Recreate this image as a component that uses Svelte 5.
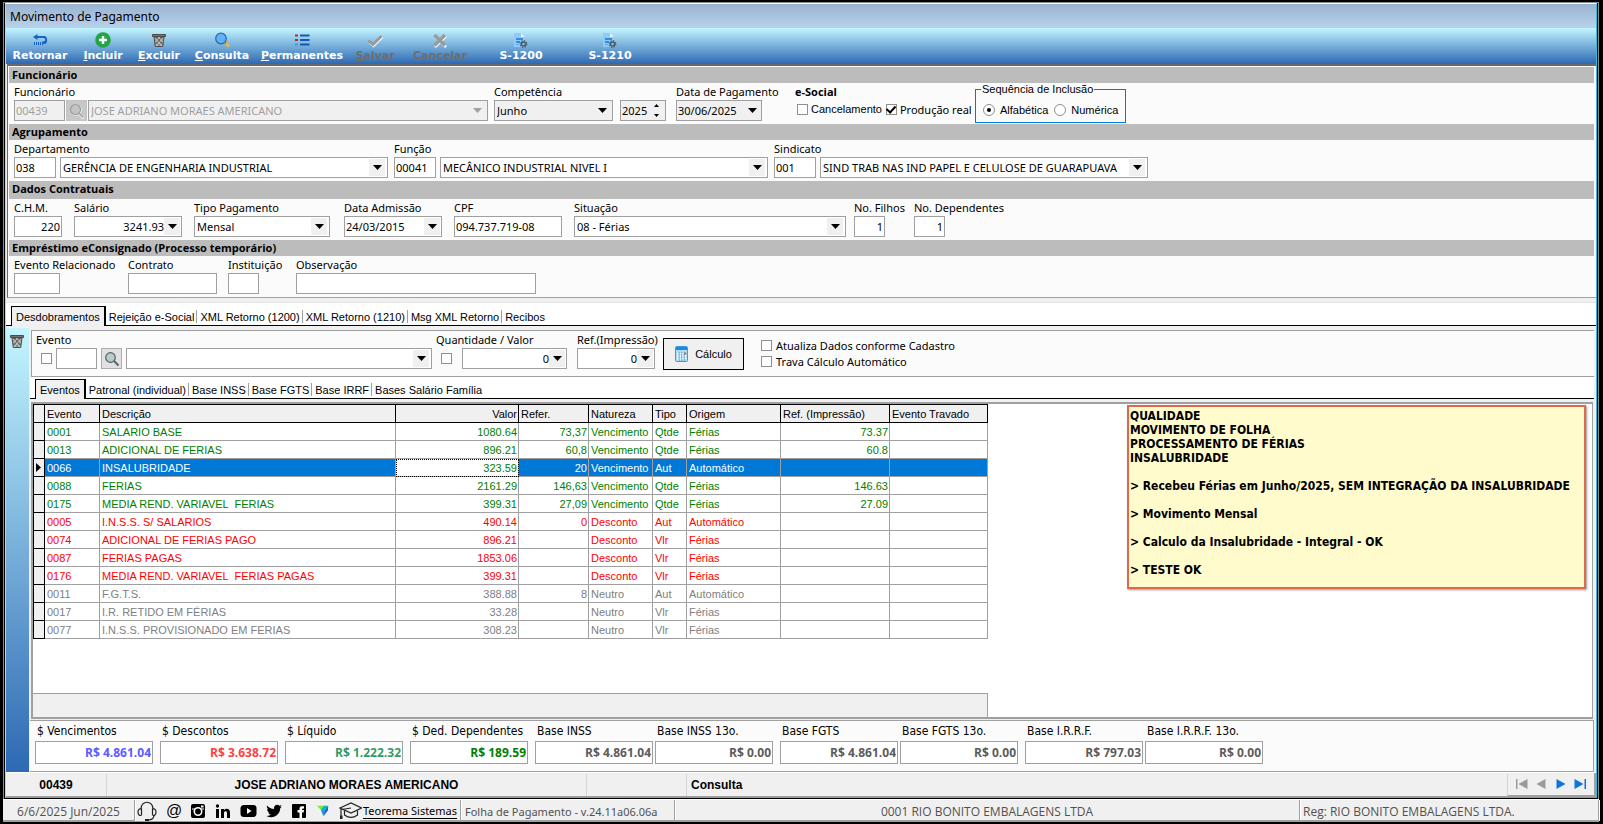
<script lang="ts">
  interface EventRow {
    code: string;
    name: string;
    value: string;
    ref?: string;
    nature: string;
    type: string;
    origin: string;
    printRef?: string;
  }

  const tools = [
    { icon: 'back', label: 'Retornar' },
    { icon: 'plus', label: 'Incluir', key: true },
    { icon: 'trash', label: 'Excluir', key: true },
    { icon: 'lens', label: 'Consulta', key: true },
    { icon: 'list', label: 'Permanentes', key: true },
    { icon: 'check', label: 'Salvar', key: true, disabled: true },
    { icon: 'cross', label: 'Cancelar', disabled: true },
    { icon: 'doc', label: 'S-1200' },
    { icon: 'doc', label: 'S-1210' },
  ];

  const mainTabs = ['Desdobramentos', 'Rejeição e-Social', 'XML Retorno (1200)', 'XML Retorno (1210)', 'Msg XML Retorno', 'Recibos'];
  const eventTabs = ['Eventos', 'Patronal (individual)', 'Base INSS', 'Base FGTS', 'Base IRRF', 'Bases Salário Família'];

  const rows: EventRow[] = [
    { code: '0001', name: 'SALARIO BASE', value: '1080.64', ref: '73,37', nature: 'Vencimento', type: 'Qtde', origin: 'Férias', printRef: '73.37' },
    { code: '0013', name: 'ADICIONAL DE FERIAS', value: '896.21', ref: '60,8', nature: 'Vencimento', type: 'Qtde', origin: 'Férias', printRef: '60.8' },
    { code: '0066', name: 'INSALUBRIDADE', value: '323.59', ref: '20', nature: 'Vencimento', type: 'Aut', origin: 'Automático' },
    { code: '0088', name: 'FERIAS', value: '2161.29', ref: '146,63', nature: 'Vencimento', type: 'Qtde', origin: 'Férias', printRef: '146.63' },
    { code: '0175', name: 'MEDIA REND. VARIAVEL  FERIAS', value: '399.31', ref: '27,09', nature: 'Vencimento', type: 'Qtde', origin: 'Férias', printRef: '27.09' },
    { code: '0005', name: 'I.N.S.S. S/ SALARIOS', value: '490.14', ref: '0', nature: 'Desconto', type: 'Aut', origin: 'Automático' },
    { code: '0074', name: 'ADICIONAL DE FERIAS PAGO', value: '896.21', nature: 'Desconto', type: 'Vlr', origin: 'Férias' },
    { code: '0087', name: 'FERIAS PAGAS', value: '1853.06', nature: 'Desconto', type: 'Vlr', origin: 'Férias' },
    { code: '0176', name: 'MEDIA REND. VARIAVEL  FERIAS PAGAS', value: '399.31', nature: 'Desconto', type: 'Vlr', origin: 'Férias' },
    { code: '0011', name: 'F.G.T.S.', value: '388.88', ref: '8', nature: 'Neutro', type: 'Aut', origin: 'Automático' },
    { code: '0017', name: 'I.R. RETIDO EM FÉRIAS', value: '33.28', nature: 'Neutro', type: 'Vlr', origin: 'Férias' },
    { code: '0077', name: 'I.N.S.S. PROVISIONADO EM FERIAS', value: '308.23', nature: 'Neutro', type: 'Vlr', origin: 'Férias' },
  ];

  const totals = [
    { id: 'venc', label: '$ Vencimentos', value: 'R$ 4.861.04', tone: 'blue' },
    { id: 'desc', label: '$ Descontos', value: 'R$ 3.638.72', tone: 'red' },
    { id: 'liq', label: '$ Líquido', value: 'R$ 1.222.32', tone: 'teal' },
    { id: 'dep', label: '$ Ded. Dependentes', value: 'R$ 189.59', tone: 'green' },
    { id: 'inss', label: 'Base INSS', value: 'R$ 4.861.04', pair: true },
    { id: 'inss13', label: 'Base INSS 13o.', value: 'R$ 0.00' },
    { id: 'fgts', label: 'Base FGTS', value: 'R$ 4.861.04', pair: true },
    { id: 'fgts13', label: 'Base FGTS 13o.', value: 'R$ 0.00' },
    { id: 'irrf', label: 'Base I.R.R.F.', value: 'R$ 797.03', pair: true },
    { id: 'irrf13', label: 'Base I.R.R.F. 13o.', value: 'R$ 0.00' },
  ];

  let mainTab = $state(0);
  let eventTab = $state(0);
  let selected = $state('0066');
</script>

{#snippet arrow()}
  <svg class="arrow" width="9" height="5" viewBox="0 0 9 5" aria-hidden="true"><path d="M0 0h9L4.500 5z" fill="currentColor" /></svg>
{/snippet}

{#snippet combo(id: string, text: string, size: string)}
  <span class="combo {size}">
    <select {id}><option>{text}</option></select>
    <span class="drop">{@render arrow()}</span>
  </span>
{/snippet}

{#snippet dropInput(id: string, text: string, size: string)}
  <span class="edit {size}">
    <input {id} value={text} />
    <button class="drop" aria-label="Abrir">{@render arrow()}</button>
  </span>
{/snippet}

{#snippet icon(name: string)}
  <svg class="icon" width="16" height="16" viewBox="0 0 16 16" aria-hidden="true">
    {#if name === 'back'}
      <path d="M5.500 2 1 5l4.500 3V6h6a1.500 1.500 0 0 1 0 3.500H10V12h2c4.500 0 4-8 0-8H5.500z" fill="#1464c8" />
      <path d="M2.500 10v3M4.500 10v3M6.500 10v3M8.500 10v3M10.500 12v1" stroke="#1464c8" />
    {:else if name === 'plus'}
      <circle cx="8" cy="8" r="7.800" fill="#23a548" />
      <path d="M8 4v8M4 8h8" stroke="#fff" stroke-width="2.400" />
    {:else if name === 'trash'}
      <path d="M1.500 2.500h13v2h-13z" fill="#747474" stroke="#4c4c4c" />
      <path d="M3 5l1.300 9.500h7.400L13 5z" fill="#8a8a8a" stroke="#4c4c4c" />
      <path d="M4 6l7 8M7.500 5l4.500 5M12 6l-7 8M8.500 5L4.500 10M4.500 12l2 2M11.500 12l-2 2" stroke="#d8d8d8" stroke-width=".8" />
      <path d="M5 5l7 8M11 5l-7 8" stroke="#4c4c4c" stroke-width=".7" />
    {:else if name === 'lens'}
      <circle cx="7" cy="6.500" r="5.300" fill="#5eb2f6" stroke="#34669b" stroke-width="1.200" />
      <path d="M11 10.500l4 4" stroke="#e8bd3f" stroke-width="2.600" />
      <path d="M10.500 10l1.500 1.500" stroke="#777" stroke-width="2" />
    {:else if name === 'glass'}
      <circle cx="6.500" cy="6.500" r="4.800" fill="#b6cccf" stroke="#555f60" stroke-width="1.200" />
      <path d="M10 10l4.500 4.500" stroke="#555f60" stroke-width="1.800" />
    {:else if name === 'glass-off'}
      <circle cx="7" cy="7" r="5" fill="none" stroke="#fff" stroke-width="1.200" />
      <circle cx="6.500" cy="6.500" r="5" fill="#c3c3c3" stroke="#9d9d9d" stroke-width="1.200" />
      <path d="M10.500 11.500l4 4" stroke="#fff" stroke-width="2" />
      <path d="M10 10.500l4 4" stroke="#9d9d9d" stroke-width="1.500" />
    {:else if name === 'list'}
      <path d="M1 3.500h3M1 8h3" stroke="#c52222" stroke-width="2.200" />
      <path d="M1 12.500h3" stroke="#35a3e9" stroke-width="2.200" />
      <path d="M6 3.500h9.500M6 8h9.500M6 12.500h9.500" stroke="#1557b5" stroke-width="2.200" />
    {:else if name === 'check'}
      <path d="M2.500 10l4 4 9-9" fill="none" stroke="#fff" stroke-width="2.200" />
      <path d="M1.500 8.500l4.500 4 8.500-8.500" fill="none" stroke="#9a9a9a" stroke-width="3" />
    {:else if name === 'cross'}
      <path d="M3 4l11 11M14 4L3 15" stroke="#fff" stroke-width="2.500" />
      <path d="M2.500 3l10.500 10.500M13 3L2.500 13.500" stroke="#9a9a9a" stroke-width="3.400" />
    {:else if name === 'doc'}
      <path d="M1 1h7l4 4v10H1z" fill="#90caf9" />
      <path d="M8 1v4h4z" fill="#e1f5fe" />
      <path d="M3 7h7M3 10h4" stroke="#1976d2" stroke-width="1.600" />
      <path d="M3 12.500h3" stroke="#64a8e8" />
      <circle cx="10.500" cy="12" r="2" fill="none" stroke="#455a64" stroke-width="1.600" />
      <circle cx="10.500" cy="12" r="3.300" fill="none" stroke="#455a64" stroke-width="1.200" stroke-dasharray="1.300 1.290" />
    {/if}
  </svg>
{/snippet}

<div class="screen">
  <div class="window">
    <div class="frame">
      <header class="title">Movimento de Pagamento</header>

      <nav class="toolbar">
        {#each tools as tool}
          <button class="tool" disabled={tool.disabled}>
            {@render icon(tool.icon)}
            <span>{#if tool.key}<u>{tool.label[0]}</u>{tool.label.slice(1)}{:else}{tool.label}{/if}</span>
          </button>
        {/each}
      </nav>

      <form class="panel" onsubmit={(e) => e.preventDefault()}>
        <h2>Funcionário</h2>
        <div class="fields employee">
          <div class="field">
            <label for="func">Funcionário</label>
            <div class="line">
              <input id="func" class="edit w51" value="00439" disabled />
              <button class="search off" disabled aria-label="Localizar funcionário">{@render icon('glass-off')}</button>
              <span class="combo name off">
                <select disabled aria-label="Nome do funcionário"><option>JOSE ADRIANO MORAES AMERICANO</option></select>
                <span class="drop">{@render arrow()}</span>
              </span>
            </div>
          </div>
          <div class="field gray">
            <label for="comp">Competência</label>
            <div class="line year">
              {@render combo('comp', 'Junho', 'w119')}
              <span class="edit w46">
                <input value="2025" aria-label="Ano" />
                <button class="spin" aria-label="Alterar ano">
                  <svg width="5" height="13" viewBox="0 0 5 13" aria-hidden="true"><path d="M0 3h5L2.500 0zM0 10h5l-2.500 3z" /></svg>
                </button>
              </span>
            </div>
          </div>
          <div class="field gray">
            <label for="pay">Data de Pagamento</label>
            {@render dropInput('pay', '30/06/2025', 'w86')}
          </div>
          <div class="field">
            <b>e-Social</b>
            <div class="line checks">
              <label class="sans"><input type="checkbox" />Cancelamento</label>
              <label><input type="checkbox" checked />Produção real</label>
            </div>
          </div>
          <fieldset>
            <legend>Sequência de Inclusão</legend>
            <label><input type="radio" name="seq" checked />Alfabética</label>
            <label><input type="radio" name="seq" />Numérica</label>
          </fieldset>
        </div>

        <h2>Agrupamento</h2>
        <div class="fields group">
          <div class="field">
            <label for="dep-code">Departamento</label>
            <div class="line code">
              <input id="dep-code" class="edit w42" value="038" />
              {@render combo('dep-name', 'GERÊNCIA DE ENGENHARIA INDUSTRIAL', 'w328')}
            </div>
          </div>
          <div class="field">
            <label for="role-code">Função</label>
            <div class="line code">
              <input id="role-code" class="edit w42" value="00041" />
              {@render combo('role-name', 'MECÂNICO INDUSTRIAL NIVEL I', 'w328')}
            </div>
          </div>
          <div class="field">
            <label for="union-code">Sindicato</label>
            <div class="line code">
              <input id="union-code" class="edit w42" value="001" />
              {@render combo('union-name', 'SIND TRAB NAS IND PAPEL E CELULOSE DE GUARAPUAVA', 'w328')}
            </div>
          </div>
        </div>

        <h2 class="tall">Dados Contratuais</h2>
        <div class="fields contract">
          <div class="field"><label for="chm">C.H.M.</label><input id="chm" class="edit num w48" value="220" /></div>
          <div class="field"><label for="sal">Salário</label>{@render dropInput('sal', '3241.93', 'num w108')}</div>
          <div class="field"><label for="tipo">Tipo Pagamento</label>{@render combo('tipo', 'Mensal', 'w136')}</div>
          <div class="field"><label for="adm">Data Admissão</label>{@render dropInput('adm', '24/03/2015', 'w98')}</div>
          <div class="field"><label for="cpf">CPF</label><input id="cpf" class="edit w108" value="094.737.719-08" /></div>
          <div class="field"><label for="sit">Situação</label>{@render combo('sit', '08 - Férias', 'w272')}</div>
          <div class="field"><label for="kids">No. Filhos</label><input id="kids" class="edit num w31" value="1" /></div>
          <div class="field"><label for="deps">No. Dependentes</label><input id="deps" class="edit num w31" value="1" /></div>
        </div>

        <h2>Empréstimo eConsignado (Processo temporário)</h2>
        <div class="fields loan">
          <div class="field"><label for="ev-rel">Evento Relacionado</label><input id="ev-rel" class="edit w46" /></div>
          <div class="field"><label for="contr">Contrato</label><input id="contr" class="edit w89" /></div>
          <div class="field"><label for="inst">Instituição</label><input id="inst" class="edit w31" /></div>
          <div class="field"><label for="obs">Observação</label><input id="obs" class="edit w240" /></div>
        </div>
      </form>

      <div class="tabs outer" role="tablist">
        {#each mainTabs as tab, i}
          <button role="tab" aria-selected={mainTab === i} class:active={mainTab === i} onclick={() => (mainTab = i)}>{tab}</button>
        {/each}
      </div>

      <div class="body">
        <aside><button aria-label="Excluir evento">{@render icon('trash')}</button></aside>

        <main>
          <form class="entry" onsubmit={(e) => e.preventDefault()}>
            <div class="field">
              <label for="event">Evento</label>
              <div class="line event">
                <input type="checkbox" aria-label="Fixar evento" />
                <input id="event" class="edit w41" />
                <button class="search" aria-label="Localizar evento">{@render icon('glass')}</button>
                <span class="combo w306">
                  <select aria-label="Descrição do evento"><option></option></select>
                  <span class="drop">{@render arrow()}</span>
                </span>
              </div>
            </div>
            <div class="field">
              <label for="qty">Quantidade / Valor</label>
              <div class="line qty">
                <input type="checkbox" aria-label="Fixar quantidade" />
                {@render dropInput('qty', '0', 'num w105')}
              </div>
            </div>
            <div class="field">
              <label for="pref">Ref.(Impressão)</label>
              {@render dropInput('pref', '0', 'num w78')}
            </div>
            <button class="calc">
              <svg width="13" height="16" viewBox="0 0 13 16" aria-hidden="true">
                <rect x=".5" y=".5" width="12" height="15" rx="1" fill="#a9dcfa" stroke="#3d9be0" />
                <rect x="1" y="1" width="11" height="3" fill="#2c86d8" />
                <path d="M3 7v7M5.500 7v7M8 7v7M10.500 9v5" stroke="#fff" stroke-width="1.600" stroke-dasharray="1.600 .9" />
                <path d="M4.200 6v9M6.700 6v9M9.200 6v9" stroke="#4b8fc4" stroke-width=".6" />
                <rect x="9.200" y="6.500" width="2" height="2" fill="#e2572b" />
              </svg>
              Cálculo
            </button>
            <div class="options">
              <label><input type="checkbox" />Atualiza Dados conforme Cadastro</label>
              <label><input type="checkbox" />Trava Cálculo Automático</label>
            </div>
          </form>

          <div class="tabs inner" role="tablist">
            {#each eventTabs as tab, i}
              <button role="tab" aria-selected={eventTab === i} class:active={eventTab === i} onclick={() => (eventTab = i)}>{tab}</button>
            {/each}
          </div>

          <div class="grid">
            <div class="grid-left">
              <table>
                <colgroup>
                  <col class="c-mark" /><col class="c-code" /><col class="c-name" /><col class="c-value" /><col class="c-ref" />
                  <col class="c-nat" /><col class="c-type" /><col class="c-orig" /><col class="c-print" /><col class="c-lock" />
                </colgroup>
                <thead>
                  <tr>
                    <th></th><th>Evento</th><th>Descrição</th><th class="right">Valor</th><th>Refer.</th>
                    <th>Natureza</th><th>Tipo</th><th>Origem</th><th>Ref. (Impressão)</th><th>Evento Travado</th>
                  </tr>
                </thead>
                <tbody>
                  {#each rows as row}
                    <tr class={row.nature.toLowerCase()} class:selected={selected === row.code} onclick={() => (selected = row.code)}>
                      <td class="mark">{#if selected === row.code}<svg width="5" height="9" viewBox="0 0 5 9" aria-hidden="true"><path d="M0 0v9l5-4.500z" /></svg>{/if}</td>
                      <td>{row.code}</td>
                      <td>{row.name}</td>
                      <td class="right value">{row.value}</td>
                      <td class="right">{row.ref ?? ''}</td>
                      <td>{row.nature}</td>
                      <td>{row.type}</td>
                      <td>{row.origin}</td>
                      <td class="right">{row.printRef ?? ''}</td>
                      <td></td>
                    </tr>
                  {/each}
                </tbody>
              </table>
              <div class="grid-foot"></div>
            </div>
            <div class="note">
              QUALIDADE<br />MOVIMENTO DE FOLHA<br />PROCESSAMENTO DE FÉRIAS<br />INSALUBRIDADE
              <p>&gt; Recebeu Férias em Junho/2025, SEM INTEGRAÇÃO DA INSALUBRIDADE</p>
              <p>&gt; Movimento Mensal</p>
              <p>&gt; Calculo da Insalubridade - Integral - OK</p>
              <p>&gt; TESTE OK</p>
            </div>
          </div>

          <div class="totals">
            {#each totals as total}
              <div class="total" class:pair={total.pair}>
                <label for={total.id}>{total.label}</label>
                <input id={total.id} class={total.tone} value={total.value} readonly />
              </div>
            {/each}
          </div>
        </main>
      </div>

      <div class="record">
        <span class="rec-code">00439</span>
        <span class="rec-name">JOSE ADRIANO MORAES AMERICANO</span>
        <span class="rec-gap"></span>
        <span class="rec-mode">Consulta</span>
        <div class="pager">
          <button disabled aria-label="Primeiro"><svg width="12" height="10" viewBox="0 0 12 10"><path d="M0 0h1.500v10H0zM11.500 0v10L2.500 5z" /></svg></button>
          <button disabled aria-label="Anterior"><svg width="12" height="10" viewBox="0 0 12 10"><path d="M10.500 0v10L1.500 5z" /></svg></button>
          <button aria-label="Próximo"><svg width="12" height="10" viewBox="0 0 12 10"><path d="M1.500 0v10l9-5z" /></svg></button>
          <button aria-label="Último"><svg width="12" height="10" viewBox="0 0 12 10"><path d="M.5 0v10l9-5zM10.500 0H12v10h-1.500z" /></svg></button>
        </div>
      </div>
    </div>
  </div>

  <footer>
    <span class="cell date">6/6/2025 Jun/2025</span>
    <span class="social">
      <svg width="20" height="20" viewBox="0 0 20 20" aria-hidden="true">
        <path d="M4 8C4-1 16-1 16 8M17 14c0 3-2 5-6 5" fill="none" stroke="#222" stroke-width="1.200" />
        <path d="M4.500 7.500v7M4 8C0 7 0 15 4 14.500M15.500 7.500v7M16 8c4-1 4 7 0 6.500" fill="none" stroke="#222" stroke-width="1.200" />
        <rect x="8" y="18" width="4" height="2" fill="#222" />
      </svg>
      <span class="at">@</span>
      <svg width="16" height="16" viewBox="0 0 16 16" aria-hidden="true">
        <rect x="1" y="1" width="14" height="14" rx="2" /><circle cx="8" cy="8.500" r="3.700" fill="none" stroke="#fff" stroke-width="1.600" />
        <path d="M2 6h3M11 6h3" stroke="#fff" /><rect x="11" y="2.500" width="2.500" height="2" fill="#fff" />
      </svg>
      <svg width="16" height="16" viewBox="0 0 16 16" aria-hidden="true">
        <path d="M1 6h3v9H1z" /><circle cx="2.500" cy="3" r="1.700" />
        <path d="M6 6h3v1.300C10.500 5 15 5.200 15 9.500V15h-3v-5c0-2.500-3-2.300-3 0v5H6z" />
      </svg>
      <svg width="17" height="16" viewBox="0 0 17 16" aria-hidden="true"><rect x=".5" y="2" width="16" height="12" rx="3.500" /><path d="M7 5v6l4.500-3z" fill="#fff" /></svg>
      <svg width="16" height="16" viewBox="0 0 16 16" aria-hidden="true">
        <path d="M1 2.500c2 2.300 4 3.300 7 3.500-.5-4 3.500-5.300 5.500-3.200l2-.8-1.200 2 1.500-.3-1.600 1.600C14.200 12 7 16.500.500 13c2 .1 3.300-.4 4.600-1.400-1.500-.1-2.500-1-2.900-2.200h1.300C2 9 1.200 7.700 1.100 6l1.400.4C1 5.200.6 4 1 2.500z" />
      </svg>
      <svg width="16" height="16" viewBox="0 0 16 16" aria-hidden="true"><rect x="1" y="1" width="14" height="14" rx="1" /><path d="M8.500 15V9.500h-2V7h2V5.500C8.500 3.500 10 3 13 3.300v2.200c-1.500 0-2 0-2 1V7h2l-.4 2.500H11V15z" fill="#fff" /></svg>
      <svg width="14" height="14" viewBox="0 0 16 16" aria-hidden="true">
        <path d="M1 2h8L5.500 6.500z" fill="#7bea28" /><path d="M9 2h5l-4.500 5-4-.5z" fill="#0bb5b0" /><path d="M5.500 6.500l3 7.500 1.500-7z" fill="#1598e8" /><path d="M10 7l4-5-.5 5.500L8.500 14z" fill="#1261d6" />
      </svg>
      <svg width="23" height="18" viewBox="0 0 23 18" aria-hidden="true">
        <path d="M1 6l11-5 10.500 5L12 11z" fill="#f0f0f0" stroke="#222" stroke-width="1.200" />
        <path d="M5.500 8.500v4.500c4 3 9 3 13 0V8.500M2 6.500V15M12 6L3 7.500" fill="none" stroke="#222" stroke-width="1.200" />
        <rect x="1" y="13.500" width="2.500" height="3.500" fill="#222" />
      </svg>
    </span>
    <span class="cell brand"><a href="#teorema">Teorema Sistemas</a></span>
    <span class="cell version">Folha de Pagamento - v.24.11a06.06a</span>
    <span class="cell company">0001 RIO BONITO EMBALAGENS LTDA</span>
    <span class="cell reg">Reg: RIO BONITO EMBALAGENS LTDA.</span>
  </footer>
</div>

<style>
  :global(body) {
    background: #000;
  }

  .screen {
    --ui: "Noto Sans", "Open Sans", sans-serif;
    --ui-bold: "Open Sans", "Noto Sans", sans-serif;
    --sans: "Liberation Sans", Arial, sans-serif;
    --tahoma: "DejaVu Sans Condensed", "DejaVu Sans", sans-serif;
    --line: #a0a0a0;
    display: flex;
    flex-direction: column;
    min-height: 100vh;
    box-sizing: border-box;
    padding: 2px 4px 2px 3px;
    color: #000;
    font: 11px/15px var(--ui);
    white-space: nowrap;
  }

  .screen * {
    box-sizing: border-box;
  }

  button,
  input,
  select {
    margin: 0;
    padding: 0;
    border: 0;
    border-radius: 0;
    color: inherit;
    font: inherit;
    background: none;
  }

  svg {
    display: block;
    flex: none;
  }

  .window {
    flex: 1;
    display: flex;
    border: 1px solid #8a8a8a;
    border-bottom: 0;
    background: #000;
    padding: 0 1px 1px 1px;
  }

  .frame {
    flex: 1;
    min-width: 0;
    display: flex;
    flex-direction: column;
    border: 1px solid #22c3e6;
    border-top-color: #fff;
    border-left-color: #b9d1ea;
    background: #f0f0f0;
  }

  .title {
    height: 24px;
    padding: 0 4px;
    font-size: 12px;
    line-height: 26px;
    background: linear-gradient(#98b3d1, #b9d2ec);
  }

  .toolbar {
    display: grid;
    grid-template-columns: 68px 58px 54px 72px 88px 58px 72px 90px 88px;
    height: 36px;
    background: linear-gradient(#c3f5ff, #2d69b4);
  }

  .tool {
    display: flex;
    flex-direction: column;
    align-items: center;
    padding-top: 4px;
    color: #fff;
    font: bold 11px/15px "DejaVu Sans", Verdana, sans-serif;
  }

  .tool:disabled {
    color: #6d6d6d;
  }

  .panel {
    margin-left: 1px;
    padding: 1px 2px 0 1px;
    border: solid #696969;
    border-width: 2px 0 0 1px;
    background: #fbfbfb;
  }

  h2 {
    margin: 0;
    padding-left: 3px;
    height: 16px;
    font: bold 11px/16px var(--ui-bold);
    background: #bcbcbc;
  }

  h2.tall {
    height: 18px;
  }

  b {
    font-family: var(--ui-bold);
  }

  .fields {
    display: grid;
    justify-content: start;
    height: 41px;
    padding: 1px 0 0 5px;
  }

  .employee {
    grid-template-columns: 480px 182px 119px 180px 151px;
  }

  .group {
    grid-template-columns: 380px 380px 374px;
  }

  .contract {
    grid-template-columns: 60px 120px 150px 110px 120px 280px 60px 100px;
  }

  .loan {
    grid-template-columns: 114px 100px 68px 240px;
  }

  .panel:has(.loan) {
    border-bottom: 1px solid var(--line);
  }

  .field {
    display: flex;
    flex-direction: column;
    align-items: flex-start;
    gap: 1px;
    min-width: 0;
  }

  .line {
    display: flex;
    gap: 2px;
    align-items: center;
  }

  .line.year {
    gap: 7px;
  }

  .line.code,
  .line.event {
    gap: 4px;
  }

  .line.checks {
    height: 18px;
    gap: 4px;
    padding-left: 2px;
  }

  .edit,
  .combo {
    height: 21px;
    border: 1px solid var(--line);
    background: #fff;
  }

  input.edit {
    padding: 0 1px 1px;
  }

  span.edit {
    display: flex;
    align-items: center;
    padding: 1px;
  }

  span.edit input {
    flex: 1;
    min-width: 0;
    width: 0;
    height: 100%;
    padding-bottom: 1px;
  }

  .num,
  .num input {
    text-align: right;
  }

  .combo {
    display: grid;
    grid-template-columns: 1fr 17px;
    padding: 1px;
  }

  .combo select {
    grid-area: 1 / 1 / 2 / 3;
    appearance: none;
    width: 100%;
    min-width: 0;
    padding-left: 1px;
    line-height: 16px;
  }

  .drop {
    width: 16px;
    height: 17px;
    display: flex;
    align-items: center;
    justify-content: center;
    color: #000;
    background: #f0f0f0;
  }

  .combo .drop {
    grid-area: 1 / 2;
    pointer-events: none;
  }

  .gray .edit,
  .gray .combo,
  .off,
  input:disabled {
    background: #f0f0f0;
  }

  .off,
  .off select,
  .off .drop,
  input.edit:disabled {
    color: #a0a0a0;
    opacity: 1;
  }

  .search {
    width: 21px;
    height: 21px;
    display: grid;
    place-items: center;
    border: 1px solid #adadad;
    background: #e1e1e1;
  }

  .search.off {
    margin: 0 -1px;
    border-color: #c3c3c3;
    background: #c8c8c8;
  }

  .spin {
    width: 16px;
    display: grid;
    place-items: center;
  }

  .name { width: 400px; }
  .w31 { width: 31px; }
  .w41 { width: 41px; }
  .w42 { width: 42px; }
  .w46 { width: 46px; }
  .w48 { width: 48px; }
  .w51 { width: 51px; }
  .w78 { width: 78px; }
  .w86 { width: 86px; }
  .w89 { width: 89px; }
  .w98 { width: 98px; }
  .w105 { width: 105px; }
  .w108 { width: 108px; }
  .w119 { width: 119px; }
  .w136 { width: 136px; }
  .w240 { width: 240px; }
  .w272 { width: 272px; }
  .w306 { width: 306px; }
  .w328 { width: 328px; }

  label:has(input) {
    display: inline-flex;
    align-items: center;
    gap: 4px;
  }

  .checks label:has(input) {
    gap: 3px;
  }

  .sans {
    font-family: var(--sans);
  }

  input[type="checkbox"],
  input[type="radio"] {
    appearance: none;
    flex: none;
    width: 11px;
    height: 11px;
    display: grid;
    place-items: center;
    border: 1px solid #8f8f8f;
    background: #fff;
  }

  input[type="checkbox"]:checked::before {
    content: "";
    width: 4px;
    height: 7px;
    margin-top: -2px;
    border: solid #000;
    border-width: 0 2px 2px 0;
    transform: rotate(42deg);
  }

  input[type="radio"] {
    width: 12px;
    height: 12px;
    border-radius: 50%;
  }

  input[type="radio"]:checked::before {
    content: "";
    width: 4px;
    height: 4px;
    border-radius: 50%;
    background: #000;
  }

  fieldset {
    display: flex;
    align-items: center;
    gap: 6px;
    height: 40px;
    margin: -1px 0 0;
    padding: 2px 0 0 7px;
    border: 1px solid #0078d7;
    font-family: var(--sans);
  }

  fieldset label {
    gap: 5px;
  }

  legend {
    margin-left: -2px;
    padding: 0 1px;
    line-height: 13px;
  }

  .tabs {
    display: flex;
    align-items: flex-end;
    border-bottom: 1px solid #000;
    background: #fff;
    font: 11px/16px var(--sans);
  }

  .tabs button {
    height: 17px;
    padding: 0 3px;
    background: linear-gradient(var(--line), var(--line)) right 2px / 1px 13px no-repeat;
  }

  .tabs button:last-child {
    background: none;
  }

  .tabs button.active {
    height: 20px;
    margin-bottom: -1px;
    padding: 0 4px;
    border: solid #000;
    border-width: 1px 2px 0 1px;
    background: #f0f0f0;
  }

  .outer {
    height: 24px;
    margin-top: 4px;
    padding-left: 5px;
    border-top: 1px solid #e3e3e3;
  }

  .inner {
    height: 22px;
    padding-left: 5px;
  }

  .body {
    flex: 1;
    display: flex;
    padding-top: 2px;
  }

  aside {
    width: 23px;
    padding: 5px 0 0 3px;
    background: linear-gradient(#c3f5ff, #2d69b4);
  }

  main {
    flex: 1;
    min-width: 0;
    display: flex;
    flex-direction: column;
    padding: 2px 2px 0 1px;
  }

  .entry {
    display: grid;
    grid-template-columns: 400px 141px 86px 81px 1fr;
    align-items: start;
    height: 47px;
    margin-left: 1px;
    padding: 1px 0 0 4px;
    border: 1px solid var(--line);
    border-right: 0;
    background: #fbfbfb;
  }

  .entry .event {
    padding-left: 5px;
  }

  .entry .qty {
    gap: 10px;
    padding-left: 5px;
  }

  .calc {
    display: flex;
    align-items: center;
    justify-content: center;
    gap: 7px;
    height: 32px;
    margin-top: 6px;
    border: 1px solid #000;
    background: #f0f0f0;
    font-family: var(--sans);
  }

  .options {
    display: flex;
    flex-direction: column;
    gap: 1px;
    padding: 6px 0 0 17px;
  }

  .grid {
    flex: 1;
    display: flex;
    justify-content: space-between;
    align-items: stretch;
    margin: 3px 1px 0;
    border: 2px solid var(--line);
    border-right-width: 1px;
    background: #fff;
  }

  .grid-left {
    display: flex;
    flex-direction: column;
    justify-content: space-between;
  }

  table {
    table-layout: fixed;
    width: 955px;
    border-spacing: 0;
    font: 11px/16px var(--sans);
  }

  .c-mark { width: 12px; }
  .c-code { width: 55px; }
  .c-name { width: 296px; }
  .c-value { width: 123px; }
  .c-ref { width: 70px; }
  .c-nat { width: 64px; }
  .c-type { width: 34px; }
  .c-orig { width: 94px; }
  .c-print { width: 109px; }
  .c-lock { width: 98px; }

  th,
  td {
    height: 18px;
    padding: 0 2px;
    border: solid var(--line);
    border-width: 0 1px 1px 0;
    text-align: left;
    font-weight: normal;
    white-space: pre;
  }

  th {
    height: 19px;
    border-color: #000;
    border-top-width: 1px;
    background: #f0f0f0;
  }

  th:first-child,
  td:first-child {
    border-color: #000;
    border-left-width: 1px;
    background: #f0f0f0;
  }

  th.right,
  td.right {
    padding-right: 1px;
    text-align: right;
  }

  .mark svg {
    fill: #000;
  }

  .vencimento { color: #008000; }
  .desconto { color: #f00; }
  .neutro { color: #808080; }

  .selected td:not(.mark, .value) {
    color: #fff;
    background: #0078d7;
  }

  .selected .value {
    outline: 1px dotted #000;
    outline-offset: -1px;
  }

  .grid-foot {
    height: 24px;
    border: solid var(--line);
    border-width: 1px 1px 0 0;
    background: #f0f0f0;
  }

  .note {
    align-self: flex-start;
    width: 459px;
    height: 184px;
    margin: 1px 6px 0 0;
    padding: 2px 1px;
    border: 2px solid #dc6a4a;
    background: #fffbcc;
    box-shadow: 1px 1px 2px #999;
    font: bold 12px/14px var(--tahoma);
  }

  .note p {
    margin: 14px 0 0;
  }

  .totals {
    display: flex;
    height: 52px;
    margin-top: 1px;
    padding: 3px 0 0 5px;
    border: 1px solid var(--line);
    border-left: 0;
    background: #fbfbfb;
    font: 12px/15px var(--tahoma);
  }

  .total {
    width: 118px;
    margin-right: 7px;
    display: flex;
    flex-direction: column;
    gap: 2px;
  }

  .total label {
    padding-left: 2px;
  }

  .total.pair {
    margin-right: 2px;
  }

  .total input {
    width: 100%;
    height: 23px;
    padding: 0 1px;
    border: 1px solid var(--line);
    background: #fff;
    color: #5c5c5c;
    font: bold 12px/16px var(--ui-bold);
    text-align: right;
  }

  .total .blue { color: #5b5bff; }
  .total .red { color: #ff4040; }
  .total .teal { color: #339966; }
  .total .green { color: #008000; }

  .record {
    display: flex;
    height: 25px;
    border-top: 1px solid #fff;
    border-bottom: 1px solid var(--line);
    font: bold 12px/22px var(--sans);
    text-align: center;
  }

  .record > span {
    border-right: 1px solid #d5d5d5;
    margin-top: 1px;
  }

  .rec-code { width: 101px; }
  .rec-name { width: 480px; }
  .rec-gap { width: 100px; }

  .rec-mode {
    flex: 1;
    padding-left: 4px;
    text-align: left;
  }

  .pager {
    display: flex;
    width: 88px;
    justify-content: space-evenly;
    border: solid var(--line);
    border-width: 0 2px 1px 0;
    fill: #0f74e0;
  }

  .pager button:disabled {
    fill: #9a9a9a;
  }

  footer {
    display: flex;
    height: 23px;
    background: #f0f0f0;
    color: #505050;
    border-bottom: 1px solid var(--line);
    border-top: 1px solid #fff;
    line-height: 23px;
  }

  .cell {
    border: solid var(--line);
    border-width: 0 1px 1px 0;
    box-shadow: 1px 0 #fff;
    text-align: center;
  }

  .date,
  .company,
  .reg {
    font-family: var(--ui-bold);
    font-size: 12px;
  }

  .date {
    width: 132px;
  }

  .social {
    display: flex;
    align-items: center;
    gap: 9px;
    width: 225px;
    padding-left: 2px;
    color: #000;
  }

  .at {
    width: 15px;
    font: 16px/20px var(--sans);
  }

  .brand {
    width: 101px;
    color: #000;
    line-height: 21px;
  }

  .brand a {
    color: inherit;
    text-underline-offset: 3px;
  }

  .version {
    width: 214px;
    padding-left: 4px;
    text-align: left;
  }

  .company {
    flex: 1;
  }

  .reg {
    width: 299px;
    padding-left: 3px;
    text-align: left;
  }
</style>
